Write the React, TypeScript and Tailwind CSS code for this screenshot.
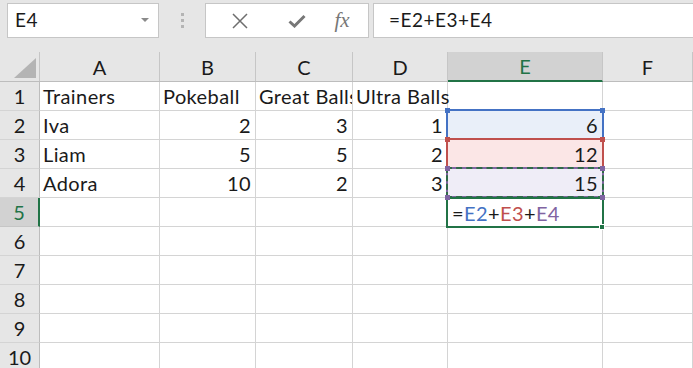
import React from "react";

const font = { fontFamily: "Lato, 'Noto Sans', sans-serif" };

type Cell = { v: string; num?: boolean; clip?: boolean };

const rows: Cell[][] = [
  [{ v: "Trainers" }, { v: "Pokeball" }, { v: "Great Balls", clip: true }, { v: "Ultra Balls" }, { v: "" }, { v: "" }],
  [{ v: "Iva" }, { v: "2", num: true }, { v: "3", num: true }, { v: "1", num: true }, { v: "6", num: true }, { v: "" }],
  [{ v: "Liam" }, { v: "5", num: true }, { v: "5", num: true }, { v: "2", num: true }, { v: "12", num: true }, { v: "" }],
  [{ v: "Adora" }, { v: "10", num: true }, { v: "2", num: true }, { v: "3", num: true }, { v: "15", num: true }, { v: "" }],
  [{ v: "" }, { v: "" }, { v: "" }, { v: "" }, { v: "" }, { v: "" }],
  [{ v: "" }, { v: "" }, { v: "" }, { v: "" }, { v: "" }, { v: "" }],
  [{ v: "" }, { v: "" }, { v: "" }, { v: "" }, { v: "" }, { v: "" }],
  [{ v: "" }, { v: "" }, { v: "" }, { v: "" }, { v: "" }, { v: "" }],
  [{ v: "" }, { v: "" }, { v: "" }, { v: "" }, { v: "" }, { v: "" }],
  [{ v: "" }, { v: "" }, { v: "" }, { v: "" }, { v: "" }, { v: "" }],
];

const colW = ["w-[120px]", "w-[96px]", "w-[97px]", "w-[95px]", "w-[155px]", "flex-1"];
const colNames = ["A", "B", "C", "D", "E", "F"];

// fills behind the referenced cells
const fills: Record<string, string> = {
  "1-4": "bg-[#e9eff9]",
  "2-4": "bg-[#fbe6e6]",
  "3-4": "bg-[#efedf7]",
};

function Handle({ x, y, color }: { x: number; y: number; color: string }) {
  return <div className={`absolute w-[5px] h-[5px] ${color}`} style={{ left: x - 2, top: y - 2 }} />;
}

export default function App() {
  return (
    <div className="relative w-[693px] h-[368px] overflow-hidden bg-white text-[#1a1a1a]" style={font}>
      {/* formula bar */}
      <div className="h-[52px] bg-[#e6e6e6] flex items-start pt-[3px] pl-[7px]">
        <div className="w-[152px] h-[35px] bg-white border border-[#c6c6c6] flex items-center pl-[7px] pr-[9px]">
          <span className="flex-1 text-[19px] tracking-[0.5px]">E4</span>
          <svg width="8" height="5" viewBox="0 0 8 5">
            <path d="M0 0 L8 0 L4 4 Z" fill="#8a8a8a" />
          </svg>
        </div>
        <div className="w-[46px] h-[35px] flex flex-col items-center justify-center gap-[3px]">
          <div className="w-[3px] h-[3px] bg-[#b4b4b4]" />
          <div className="w-[3px] h-[3px] bg-[#b4b4b4]" />
          <div className="w-[3px] h-[3px] bg-[#b4b4b4]" />
        </div>
        <div className="w-[164px] h-[35px] bg-white border border-[#c6c6c6] flex items-center">
          <div className="w-[66px] flex justify-center pl-[2px]">
            <svg width="18" height="18" viewBox="0 0 18 18">
              <path d="M2 2 L16 16 M16 2 L2 16" stroke="#6e6e6e" strokeWidth="1.5" />
            </svg>
          </div>
          <div className="w-[50px] flex justify-center">
            <svg width="18" height="14" viewBox="0 0 18 14">
              <path d="M1.5 7.5 L6.5 12 L16.5 2" stroke="#777" strokeWidth="3" fill="none" />
            </svg>
          </div>
          <div className="flex-1 flex justify-center pr-[6px]">
            <span className="text-[21px] italic text-[#777]" style={{ fontFamily: "'Liberation Serif', serif" }}>
              fx
            </span>
          </div>
        </div>
        <div className="ml-[4px] flex-1 h-[35px] bg-white border border-r-0 border-[#c6c6c6] flex items-center pl-[15px] text-[19px] tracking-[0.5px]">
          =E2+E3+E4
        </div>
      </div>

      {/* column headers */}
      <div className="flex h-[30px] bg-[#e6e6e6] border-b border-[#bdbdbd]">
        <div className="w-[40px] border-r border-[#c6c6c6] relative">
          <svg className="absolute right-[3px] bottom-[3px]" width="22" height="20" viewBox="0 0 22 20">
            <path d="M22 0 L22 20 L0 20 Z" fill="#b4b4b4" />
          </svg>
        </div>
        {colNames.map((c, i) => (
          <div
            key={c}
            className={`${colW[i]} flex items-center justify-center text-[20px] ${
              c === "E"
                ? "bg-[#d2d2d2] text-[#217346] border-b-2 border-[#217346] -mb-px border-r border-r-[#c6c6c6]"
                : "border-r border-[#c6c6c6]"
            }`}
          >
            {c}
          </div>
        ))}
      </div>

      {/* grid */}
      {rows.map((r, ri) => (
        <div key={ri} className="flex h-[29px]">
          <div
            className={`w-[40px] flex items-center justify-center text-[20px] border-b ${
              ri === 4
                ? "bg-[#d2d2d2] text-[#217346] border-r-2 border-r-[#217346] border-b-[#c6c6c6]"
                : "bg-[#e6e6e6] border-r border-r-[#bdbdbd] border-b-[#d4d4d4]"
            }`}
          >
            {ri + 1}
          </div>
          {r.map((c, ci) => (
            <div
              key={ci}
              className={`${colW[ci]} ${fills[`${ri}-${ci}`] ?? ""} border-r border-b border-[#d4d4d4] flex items-center text-[20px] tracking-[0.4px] whitespace-nowrap ${
                c.num ? "justify-end pr-[4px]" : "pl-[3px]"
              } ${c.clip ? "overflow-hidden" : ""}`}
            >
              {c.v}
            </div>
          ))}
        </div>
      ))}

      {/* reference outlines */}
      <div className="absolute left-[446px] top-[109px] w-[158px] h-[31px] border-2 border-[#4472c4]" />
      <div className="absolute left-[446px] top-[138px] w-[158px] h-[31px] border-2 border-[#c0504d]" />
      <div className="absolute left-[446px] top-[167px] w-[158px] h-[31px] border-2 border-[#8064a2]" />
      <div className="absolute left-[446px] top-[167px] w-[158px] h-[31px] border-2 border-dashed border-[#2f6b47]" />
      <div className="absolute left-[446px] top-[197px] w-[158px] h-[31px] border-2 border-[#217346] bg-white flex items-center pl-[4px] text-[20px] tracking-[0.4px] whitespace-nowrap">
        <span>=</span>
        <span className="text-[#4472c4]">E2</span>
        <span>+</span>
        <span className="text-[#c0504d]">E3</span>
        <span>+</span>
        <span className="text-[#8064a2]">E4</span>
      </div>
      <div className="absolute left-[599px] top-[224px] w-[6px] h-[6px] bg-[#217346] border border-white" />

      <Handle x={447} y={110} color="bg-[#4472c4]" />
      <Handle x={602} y={110} color="bg-[#4472c4]" />
      <Handle x={447} y={139} color="bg-[#c0504d]" />
      <Handle x={602} y={139} color="bg-[#c0504d]" />
      <Handle x={447} y={168} color="bg-[#8064a2]" />
      <Handle x={602} y={168} color="bg-[#8064a2]" />
      <Handle x={447} y={197} color="bg-[#8064a2]" />
      <Handle x={602} y={197} color="bg-[#8064a2]" />
    </div>
  );
}
